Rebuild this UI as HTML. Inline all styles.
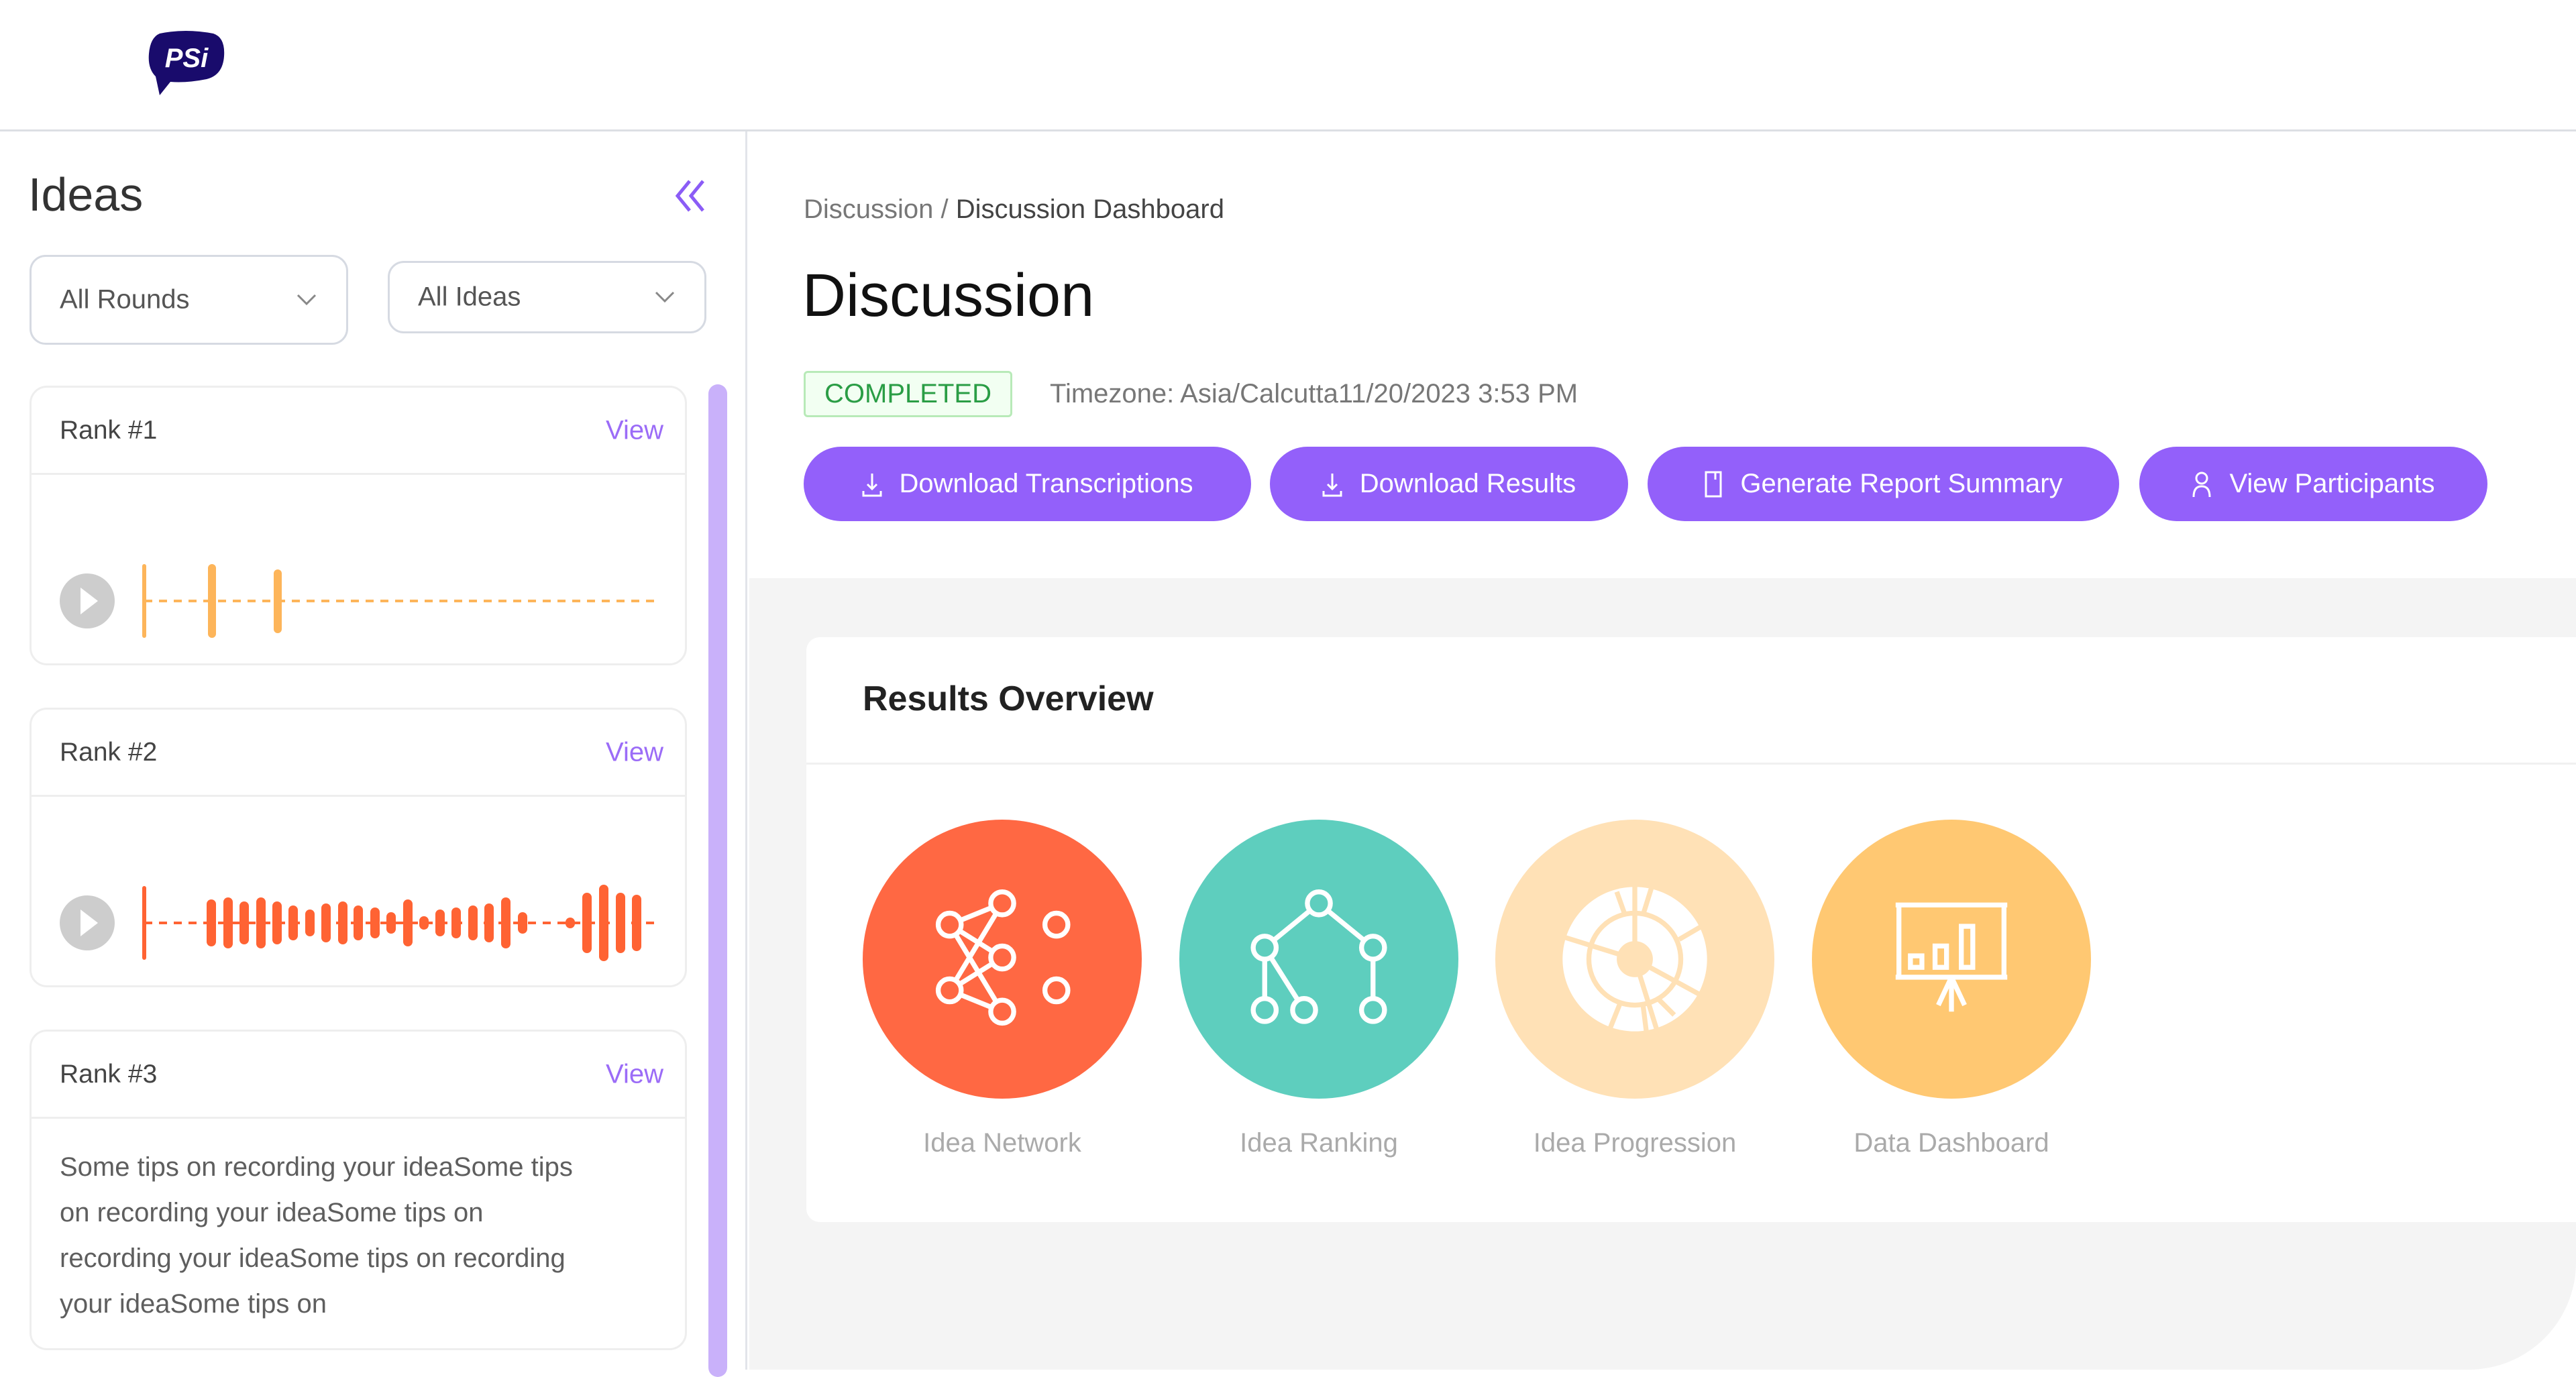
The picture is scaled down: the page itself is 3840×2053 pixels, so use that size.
<!DOCTYPE html>
<html><head><meta charset="utf-8"><style>
*{margin:0;padding:0;box-sizing:border-box}
body{width:3840px;height:2042px;background:#fff;font-family:"Liberation Sans",sans-serif;position:relative;overflow:hidden;color:#333}
.a{position:absolute}
.hdr{left:0;top:0;width:3840px;height:196px;background:#fff;border-bottom:3px solid #dcdfe4}
.side{left:0;top:196px;width:1114px;height:1846px;background:#fff;border-right:3px solid #e2e4ea}
.dd{border:3px solid #d6dae2;border-radius:24px;background:#fff;font-size:40px;color:#555}
.dd span{position:absolute;left:42px;top:50%;transform:translateY(-50%)}
.dd svg{position:absolute;right:44px;top:50%;transform:translateY(-50%)}
.card{left:44px;width:980px;border:3px solid #eeeeee;border-radius:26px;background:#fff}
.card .h{position:absolute;left:0;right:0;top:0;height:130px;border-bottom:3px solid #eeeeee}
.card .h b{font-weight:normal;position:absolute;left:42px;top:50%;transform:translateY(-50%);font-size:39px;color:#444}
.card .h i{font-style:normal;position:absolute;right:32px;top:50%;transform:translateY(-50%);font-size:40px;color:#9b6cf7}
.btn{top:666px;height:111px;border-radius:56px;background:#9360fa;color:#fff;font-size:40px;display:flex;align-items:center;justify-content:center;gap:26px}
.lbl{top:1682px;width:420px;text-align:center;font-size:40px;color:#aaa}
</style></head><body>
<div class="a hdr"></div>
<svg class="a" style="left:218px;top:42px" width="120" height="104" viewBox="0 0 120 104">
<path d="M20 8 Q58 0 100 8 Q118 14 116 42 Q114 70 90 76 Q60 82 36 80 L20 100 L14 72 Q2 60 4 38 Q6 14 20 8Z" fill="#190b6c"/>
<text x="60" y="58" text-anchor="middle" font-family="Liberation Sans" font-weight="bold" font-style="italic" font-size="40" fill="#fff">PSi</text>
</svg>
<div class="a side"></div>
<div class="a" style="left:42px;top:250px;font-size:70px;color:#333">Ideas</div>
<svg class="a" style="left:1004px;top:266px" width="50" height="52" viewBox="0 0 50 52"><path d="M24 4 L6 26 L24 48 M44 4 L26 26 L44 48" fill="none" stroke="#8b5cf6" stroke-width="5"/></svg>
<div class="a dd" style="left:44px;top:380px;width:475px;height:134px"><span>All Rounds</span><svg width="30" height="18" viewBox="0 0 30 18"><path d="M2 2 L15 15 L28 2" fill="none" stroke="#888" stroke-width="3"/></svg></div>
<div class="a dd" style="left:578px;top:389px;width:475px;height:108px"><span>All Ideas</span><svg width="30" height="18" viewBox="0 0 30 18"><path d="M2 2 L15 15 L28 2" fill="none" stroke="#888" stroke-width="3"/></svg></div>
<div class="a" style="left:1056px;top:573px;width:28px;height:1480px;background:#c9b1fa;border-radius:14px"></div>

<div class="a card" style="top:575px;height:417px"><div class="h"><b>Rank #1</b><i>View</i></div></div>
<div class="a card" style="top:1055px;height:417px"><div class="h"><b>Rank #2</b><i>View</i></div></div>
<div class="a card" style="top:1535px;height:478px"><div class="h"><b>Rank #3</b><i>View</i></div>
<div style="position:absolute;left:42px;top:168px;width:800px;font-size:40px;line-height:68px;color:#5e5e5e">Some tips on recording your ideaSome tips on recording your ideaSome tips on recording your ideaSome tips on recording your ideaSome tips on</div></div>

<svg class="a" style="left:0;top:0" width="1100" height="2042">
<circle cx="130" cy="896" r="41" fill="#cdcdcd"/><path d="M120 876 L146 896 L120 916Z" fill="#fff"/>
<line x1="215" y1="896" x2="977" y2="896" stroke="#fdb55a" stroke-width="4" stroke-dasharray="12 10"/>
<rect x="212" y="841" width="6" height="110" rx="3" fill="#fdb55a"/>
<rect x="310" y="841" width="12" height="110" rx="6" fill="#fdb55a"/>
<rect x="408" y="849" width="12" height="95" rx="6" fill="#fdb55a"/>
<circle cx="130" cy="1376" r="41" fill="#cdcdcd"/><path d="M120 1356 L146 1376 L120 1396Z" fill="#fff"/>
<line x1="215" y1="1376" x2="975" y2="1376" stroke="#ff6333" stroke-width="4" stroke-dasharray="12 10"/>
<rect x="212" y="1321" width="6" height="110" rx="3" fill="#ff6333"/>
<g fill="#ff6333">
<rect x="308" y="1341" width="14" height="70" rx="7"/>
<rect x="333" y="1338" width="14" height="76" rx="7"/>
<rect x="357" y="1344" width="14" height="64" rx="7"/>
<rect x="382" y="1338" width="14" height="76" rx="7"/>
<rect x="406" y="1344" width="14" height="64" rx="7"/>
<rect x="430" y="1350" width="14" height="52" rx="7"/>
<rect x="455" y="1356" width="14" height="40" rx="7"/>
<rect x="479" y="1347" width="14" height="58" rx="7"/>
<rect x="504" y="1344" width="14" height="64" rx="7"/>
<rect x="527" y="1350" width="14" height="52" rx="7"/>
<rect x="552" y="1353" width="14" height="46" rx="7"/>
<rect x="576" y="1360" width="14" height="32" rx="7"/>
<rect x="601" y="1341" width="14" height="70" rx="7"/>
<rect x="625" y="1366" width="14" height="20" rx="7"/>
<rect x="649" y="1356" width="14" height="40" rx="7"/>
<rect x="673" y="1353" width="14" height="46" rx="7"/>
<rect x="698" y="1350" width="14" height="52" rx="7"/>
<rect x="722" y="1347" width="14" height="58" rx="7"/>
<rect x="747" y="1338" width="14" height="76" rx="7"/>
<rect x="772" y="1360" width="14" height="32" rx="7"/>
<rect x="843" y="1368" width="14" height="16" rx="7"/>
<rect x="868" y="1331" width="14" height="90" rx="7"/>
<rect x="893" y="1319" width="14" height="114" rx="7"/>
<rect x="918" y="1331" width="14" height="90" rx="7"/>
<rect x="942" y="1334" width="14" height="84" rx="7"/>
</g>
</svg>

<div class="a" style="left:1117px;top:862px;width:2723px;height:1180px;background:#f4f4f4;border-bottom-right-radius:160px"></div>
<div class="a" style="left:1198px;top:290px;font-size:40px;color:#777">Discussion / <span style="color:#444">Discussion Dashboard</span></div>
<div class="a" style="left:1196px;top:390px;font-size:90px;color:#111">Discussion</div>
<div class="a" style="left:1198px;top:553px;width:311px;height:69px;border:3px solid #b8eab8;background:#f2fff2;border-radius:6px;color:#2a9d45;font-size:40px;display:flex;align-items:center;justify-content:center">COMPLETED</div>
<div class="a" style="left:1565px;top:565px;font-size:40px;color:#777">Timezone: Asia/Calcutta11/20/2023 3:53 PM</div>

<div class="a btn" style="left:1198px;width:667px"><svg width="30" height="40" viewBox="0 0 30 40"><path d="M15 4 V26 M8 20 L15 27 L22 20 M2 30 V37 H28 V30" fill="none" stroke="#fff" stroke-width="3"/></svg>Download Transcriptions</div>
<div class="a btn" style="left:1893px;width:534px"><svg width="30" height="40" viewBox="0 0 30 40"><path d="M15 4 V26 M8 20 L15 27 L22 20 M2 30 V37 H28 V30" fill="none" stroke="#fff" stroke-width="3"/></svg>Download Results</div>
<div class="a btn" style="left:2456px;width:703px"><svg width="28" height="42" viewBox="0 0 28 42"><path d="M3 3 H25 V39 H3Z M17 3 V14" fill="none" stroke="#fff" stroke-width="3"/></svg>Generate Report Summary</div>
<div class="a btn" style="left:3189px;width:519px"><svg width="30" height="42" viewBox="0 0 30 42"><circle cx="15" cy="12" r="8" fill="none" stroke="#fff" stroke-width="3"/><path d="M3 40 Q3 24 15 24 Q27 24 27 40" fill="none" stroke="#fff" stroke-width="3"/></svg>View Participants</div>

<div class="a" style="left:1202px;top:950px;width:2700px;height:872px;background:#fff;border-radius:20px"></div>
<div class="a" style="left:1202px;top:1137px;width:2640px;height:3px;background:#f0f0f0"></div>
<div class="a" style="left:1286px;top:1012px;font-size:52px;font-weight:bold;color:#222">Results Overview</div>

<svg class="a" style="left:1286px;top:1222px" width="416" height="416" viewBox="-85 -85 170 170">
<circle r="85" fill="#ff6843"/>
<g stroke="#fff" stroke-width="3" fill="none">
<path d="M0 -34 L-32 -21 L0 -1 L-32 19 L0 32 M-32 -21 L0 32 M0 -34 L-32 19"/>
<g fill="#ff6843"><circle cx="0" cy="-34" r="7"/><circle cx="-32" cy="-21" r="7"/><circle cx="0" cy="-1" r="7"/><circle cx="-32" cy="19" r="7"/><circle cx="0" cy="32" r="7"/><circle cx="33" cy="-21" r="7"/><circle cx="33" cy="19" r="7"/></g>
</g></svg>
<svg class="a" style="left:1758px;top:1222px" width="416" height="416" viewBox="-85 -85 170 170">
<circle r="85" fill="#5ecebe"/>
<g stroke="#fff" stroke-width="3" fill="none">
<path d="M0 -34 L-33 -7 M0 -34 L33 -7 M-33 -7 L-33 31 M-33 -7 L-9 31 M33 -7 L33 31"/>
<g fill="#5ecebe"><circle cx="0" cy="-34" r="7"/><circle cx="-33" cy="-7" r="7"/><circle cx="33" cy="-7" r="7"/><circle cx="-33" cy="31" r="7"/><circle cx="-9" cy="31" r="7"/><circle cx="33" cy="31" r="7"/></g>
</g></svg>
<svg class="a" style="left:2229px;top:1222px" width="416" height="416" viewBox="-85 -85 170 170">
<circle r="85" fill="#ffe1b6"/>
<circle r="44" fill="#fff"/>
<g stroke="#ffe1b6" stroke-width="3" fill="none">
<circle r="28"/>
<path d="M0 0 L0 -45 M0 0 L-45 -14 M0 0 L44 24 M0 0 L14 45 M-11 -41 L-6 -27 M10 -43 L5 -27 M44 -22 L27 -12 M-15 42 L-9 27 M7 44 L5 28 M24 34 L14 24"/>
</g>
<circle r="11" fill="#ffe1b6"/>
</svg>
<svg class="a" style="left:2701px;top:1222px" width="416" height="416" viewBox="-85 -85 170 170">
<circle r="85" fill="#ffc872"/>
<g stroke="#fff" stroke-width="3" fill="none">
<path d="M-34 -33 H34 M-32 -33 V11 H32 V-33 M-34 11 H34"/>
<rect x="-25" y="-2" width="7" height="7"/><rect x="-10" y="-8" width="7" height="13"/><rect x="6" y="-20" width="7" height="25"/>
<path d="M0 11 V32 M0 11 L-8 28 M0 11 L8 28"/>
</g></svg>
<div class="a lbl" style="left:1284px">Idea Network</div>
<div class="a lbl" style="left:1756px">Idea Ranking</div>
<div class="a lbl" style="left:2227px">Idea Progression</div>
<div class="a lbl" style="left:2699px">Data Dashboard</div>
</body></html>
